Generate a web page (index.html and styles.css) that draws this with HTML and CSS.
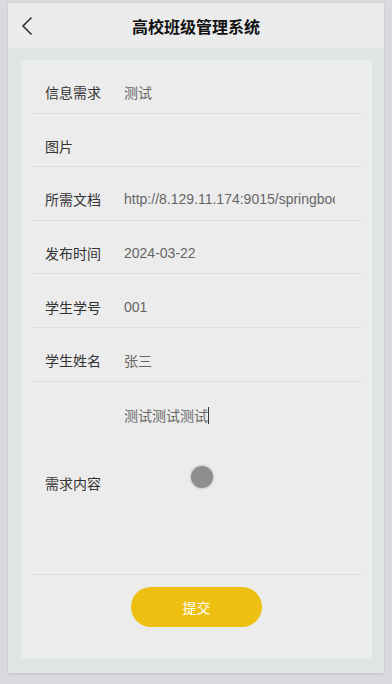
FILE: index.html
```html
<!DOCTYPE html>
<html lang="zh">
<head>
<meta charset="utf-8">
<title>高校班级管理系统</title>
<link rel="stylesheet" href="styles.css">
</head>
<body>
<div class="phone">
  <header class="topbar">
    <span class="back">
      <svg width="12" height="20" viewBox="0 0 12 20"><path d="M10.5 1.5 L2 10 L10.5 18.5" fill="none" stroke="#333" stroke-width="1.6"/></svg>
    </span>
    <h1 class="title">高校班级管理系统</h1>
  </header>
  <main class="content">
    <section class="card">
      <div class="row"><span class="label">信息需求</span><span class="value">测试</span></div>
      <div class="row"><span class="label">图片</span><span class="value"></span></div>
      <div class="row"><span class="label">所需文档</span><span class="value">http://8.129.11.174:9015/springboot/upload/file.docx</span></div>
      <div class="row"><span class="label">发布时间</span><span class="value">2024-03-22</span></div>
      <div class="row"><span class="label">学生学号</span><span class="value">001</span></div>
      <div class="row"><span class="label">学生姓名</span><span class="value">张三</span></div>
      <div class="row row-area">
        <span class="label label-area">需求内容</span>
        <div class="area"><span class="area-text">测试测试测试</span><span class="caret"></span></div>
        <span class="touch"></span>
      </div>
      <div class="actions"><button class="submit">提交</button></div>
    </section>
  </main>
</div>
</body>
</html>
```
FILE: styles.css
```css
* { box-sizing: border-box; }
html, body { margin: 0; padding: 0; }
body {
  background: #d9dadf;
  font-family: "Liberation Sans", "Noto Sans CJK SC", sans-serif;
  width: 392px;
  height: 684px;
  overflow: hidden;
}
.phone {
  margin: 3px 8px 0;
  width: 376px;
  height: 670px;
  display: flex;
  flex-direction: column;
  box-shadow: 0 1px 2px rgba(0,0,0,0.12);
}
.topbar {
  height: 45px;
  background: #ebebeb;
  display: flex;
  align-items: center;
  justify-content: center;
  position: relative;
}
.back {
  position: absolute;
  left: 13px;
  top: 13px;
  display: flex;
}
.title {
  margin: 0;
  font-size: 16px;
  font-weight: bold;
  color: #111;
  font-family: "Noto Sans CJK SC", sans-serif;
  letter-spacing: 0;
}
.content {
  flex: 1;
  background: #dfe5e5;
  padding: 12px 12px 15px 13px;
  display: flex;
}
.card {
  flex: 1;
  background: #ececec;
  padding: 0 11px;
  display: flex;
  flex-direction: column;
}
.row {
  height: 53.6px;
  border-bottom: 1px solid #dcdcdc;
  display: flex;
  align-items: center;
  padding-left: 13px;
  padding-top: 12px;
  font-size: 14px;
  position: relative;
}
.label {
  width: 79px;
  flex: none;
  color: #333;
  font-family: "Noto Sans CJK SC", sans-serif;
}
.value {
  width: 211px;
  color: #666;
  white-space: nowrap;
  overflow: hidden;
  font-family: "Liberation Sans", "Noto Sans CJK SC", sans-serif;
}
.row-area {
  height: 193px;
  padding-top: 0;
  align-items: stretch;
}
.label-area {
  align-self: center;
  padding-top: 10px;
}
.area {
  padding-top: 23px;
  color: #666;
  display: flex;
  align-items: flex-start;
  font-family: "Noto Sans CJK SC", sans-serif;
  line-height: 20px;
}
.caret {
  display: inline-block;
  width: 1px;
  height: 17px;
  margin-top: 2px;
  background: #333;
}
.touch {
  position: absolute;
  left: 159px;
  top: 84px;
  width: 22px;
  height: 22px;
  border-radius: 50%;
  background: #8e8e8e;
  box-shadow: 0 0 2px 1px rgba(0,0,0,0.15);
}
.actions {
  display: flex;
  justify-content: center;
  padding-top: 12px;
}
.submit {
  width: 131px;
  height: 40px;
  border: none;
  border-radius: 20px;
  background: #ecbf10;
  color: #fff;
  font-size: 14px;
  font-family: "Noto Sans CJK SC", sans-serif;
  padding: 0;
}
```
